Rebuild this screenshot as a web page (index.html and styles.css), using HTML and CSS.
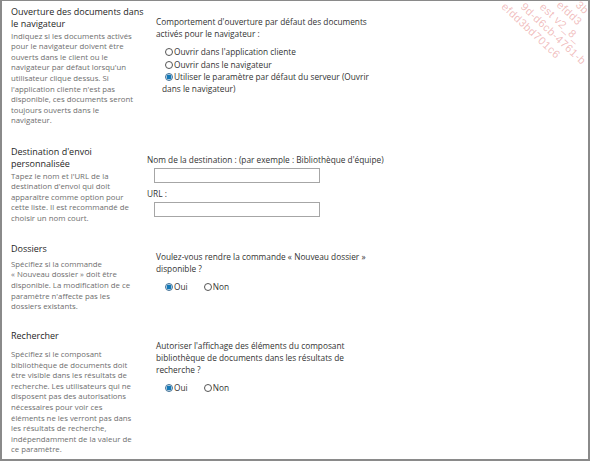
FILE: index.html
```html
<!DOCTYPE html>
<html lang="fr">
<head>
<meta charset="utf-8">
<link rel="stylesheet" href="styles.css">
</head>
<body>
<div class="frame">
  <div class="section s1">
    <div class="left">
      <div class="title">Ouverture des documents dans<br>le navigateur</div>
      <div class="desc">Indiquez si les documents activés<br>pour le navigateur doivent être<br>ouverts dans le client ou le<br>navigateur par défaut lorsqu'un<br>utilisateur clique dessus. Si<br>l'application cliente n'est pas<br>disponible, ces documents seront<br>toujours ouverts dans le<br>navigateur.</div>
    </div>
    <div class="right">
      <div class="question">Comportement d'ouverture par défaut des documents activés pour le navigateur :</div>
      <div class="radios stacked">
        <div class="opt"><span class="radio"></span>Ouvrir dans l'application cliente</div>
        <div class="opt"><span class="radio"></span>Ouvrir dans le navigateur</div>
        <div class="opt"><span class="radio checked"></span>Utiliser le paramètre par défaut du serveur (Ouvrir dans le navigateur)</div>
      </div>
    </div>
  </div>

  <div class="section s2">
    <div class="left">
      <div class="title">Destination d'envoi<br>personnalisée</div>
      <div class="desc">Tapez le nom et l'URL de la<br>destination d'envoi qui doit<br>apparaître comme option pour<br>cette liste. Il est recommandé de<br>choisir un nom court.</div>
    </div>
    <div class="right">
      <div class="label">Nom de la destination : (par exemple : Bibliothèque d'équipe)</div>
      <div class="field"></div>
      <div class="label">URL :</div>
      <div class="field"></div>
    </div>
  </div>

  <div class="section s3">
    <div class="left">
      <div class="title">Dossiers</div>
      <div class="desc">Spécifiez si la commande<br>« Nouveau dossier » doit être<br>disponible. La modification de ce<br>paramètre n'affecte pas les<br>dossiers existants.</div>
    </div>
    <div class="right">
      <div class="question">Voulez-vous rendre la commande « Nouveau dossier » disponible ?</div>
      <div class="radios inline">
        <div class="opt"><span class="radio checked"></span>Oui</div>
        <div class="opt"><span class="radio"></span>Non</div>
      </div>
    </div>
  </div>

  <div class="section s4">
    <div class="left">
      <div class="title">Rechercher</div>
      <div class="desc">Spécifiez si le composant<br>bibliothèque de documents doit<br>être visible dans les résultats de<br>recherche. Les utilisateurs qui ne<br>disposent pas des autorisations<br>nécessaires pour voir ces<br>éléments ne les verront pas dans<br>les résultats de recherche,<br>indépendamment de la valeur de<br>ce paramètre.</div>
    </div>
    <div class="right">
      <div class="question">Autoriser l'affichage des éléments du composant bibliothèque de documents dans les résultats de recherche ?</div>
      <div class="radios inline">
        <div class="opt"><span class="radio checked"></span>Oui</div>
        <div class="opt"><span class="radio"></span>Non</div>
      </div>
    </div>
  </div>

  <div class="watermark">
    <div class="wm-text">
      <div class="wm-e">3b</div>
      <div class="wm-d">efdd3</div>
      <div class="wm-c">est v2_8_</div>
      <div class="wm-b">9d-d6cb-4761-b</div>
      <div class="wm-a">efdd3bd701c6</div>
    </div>
  </div>
</div>
</body>
</html>
```

FILE: styles.css
```css
html, body {
  margin: 0;
  padding: 0;
  background: #ffffff;
}

.frame {
  position: relative;
  width: 590px;
  height: 461px;
  box-sizing: border-box;
  border-top: 1px solid #8a8a8a;
  border-left: 2px solid #8a8a8a;
  border-right: 2px solid #8a8a8a;
  border-bottom: 2px solid #8a8a8a;
  overflow: hidden;
  font-family: "Open Sans", "Noto Sans", sans-serif;
  color: #333333;
}

.section {
  display: grid;
  grid-template-columns: 145px 1fr;
}

.left {
  padding-left: 9px;
}

.title {
  font-size: 9px;
  line-height: 12.3px;
  color: #262626;
  white-space: nowrap;
}

.desc {
  font-size: 7.8px;
  line-height: 10.6px;
  color: #6e6e6e;
  white-space: nowrap;
}

.question {
  padding-left: 9px;
  font-size: 8.3px;
  line-height: 12.2px;
  color: #333333;
  width: 214px;
}

.radios {
  padding-left: 15px;
  font-size: 8.3px;
  line-height: 12.2px;
  color: #333333;
}

.radios.stacked {
  margin-top: 6px;
  width: 214px;
}

.radios.inline {
  display: flex;
  gap: 13px;
  margin-top: 6px;
}

.radio {
  display: inline-block;
  box-sizing: border-box;
  width: 8px;
  height: 8px;
  margin: 0 1px 0 3px;
  border: 1px solid #555555;
  border-radius: 50%;
  vertical-align: -1px;
  background: #ffffff;
}

.radio.checked {
  border-color: #3f6f95;
  background: radial-gradient(circle, #1479b8 0 2.2px, #cfe3f0 2.6px 3px, #ffffff 3.2px);
}

.label {
  font-size: 8.3px;
  line-height: 12.2px;
  color: #333333;
}

.field {
  box-sizing: border-box;
  width: 166px;
  height: 15px;
  margin: 2px 0 5px 7px;
  border: 1px solid #a6a6a6;
  background: #ffffff;
}

.s1 {
  padding-top: 5px;
}
.s1 .right {
  padding-top: 10px;
}

.s2 {
  margin-top: 20px;
}
.s2 .right {
  padding-top: 8px;
}

.s3 {
  margin-top: 19px;
}
.s3 .title {
  margin-bottom: 4px;
}
.s3 .right {
  padding-top: 8px;
}

.s4 {
  margin-top: 18px;
}
.s4 .title {
  margin-bottom: 7px;
}
.s4 .right {
  padding-top: 10px;
}

.watermark {
  position: absolute;
  inset: 0;
  pointer-events: none;
  overflow: hidden;
}

.wm-text {
  position: absolute;
  left: 514px;
  top: -64px;
  transform: rotate(43deg);
  transform-origin: 0 0;
  font-family: "Liberation Sans", Arial, sans-serif;
  font-size: 11px;
  letter-spacing: 0.5px;
  line-height: 13px;
  color: rgba(218, 90, 90, 0.4);
  white-space: nowrap;
}

.wm-e { padding-left: 90px; }
.wm-d { padding-left: 76px; }
.wm-c { padding-left: 65px; }
.wm-b { padding-left: 51px; }
.wm-a { padding-left: 37px; }
```
